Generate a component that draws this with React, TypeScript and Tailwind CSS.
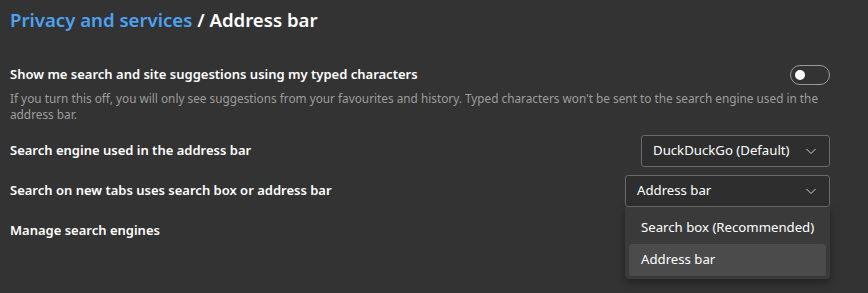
import React from 'react';

const Chevron: React.FC = () => (
    <svg width="12" height="12" viewBox="0 0 12 12" fill="none" className="text-[#cfcfcf]">
        <path d="M1.5 4 L6 8.5 L10.5 4" stroke="currentColor" strokeWidth="1" />
    </svg>
);

const App: React.FC = () => {
    return (
        <div
            className="w-[868px] h-[293px] bg-[#333333] text-white overflow-hidden"
            style={{ fontFamily: '"Noto Sans", "Open Sans", sans-serif' }}
        >
            <div className="pl-[10px] pr-[38px]">
                <h1 className="pt-[7px] h-[34px] text-[18.6px] leading-[26px] font-semibold">
                    <span className="text-[#4ca2f0]">Privacy and services</span>
                    <span> / Address bar</span>
                </h1>

                <div className="mt-[30px]">
                    <div className="flex items-center justify-between h-[22px]">
                        <span className="text-[13px] font-semibold">Show me search and site suggestions using my typed characters</span>
                        <button className="w-[40px] h-[20px] rounded-full border border-[#9a9a9a] flex items-center pl-[4px]">
                            <span className="w-[10px] h-[10px] rounded-full bg-white" />
                        </button>
                    </div>
                    <p className="text-[11.8px] leading-[16px] text-[#9d9d9d] mt-[4px]">
                        If you turn this off, you will only see suggestions from your favourites and history. Typed characters won't be sent to the search engine used in the address bar.
                    </p>
                </div>

                <div className="flex items-center justify-between mt-[13px] h-[32px]">
                    <span className="text-[13px] font-semibold">Search engine used in the address bar</span>
                    <div className="w-[189px] h-[32px] border border-[#6a6a6a] rounded-[3px] bg-[#2e2e2e] flex items-center justify-between pl-[11px] pr-[12px] text-[13.2px]">
                        <span>DuckDuckGo (Default)</span>
                        <Chevron />
                    </div>
                </div>

                <div className="flex items-center justify-between mt-[8px] h-[32px] relative">
                    <span className="text-[13px] font-semibold">Search on new tabs uses search box or address bar</span>
                    <div className="w-[205px] h-[32px] border border-[#6a6a6a] rounded-[3px] bg-[#2e2e2e] flex items-center justify-between pl-[11px] pr-[12px] text-[13.2px]">
                        <span>Address bar</span>
                        <Chevron />
                    </div>
                    <div className="absolute right-0 top-[32px] w-[205px] bg-[#3a3a3a] rounded-b-[4px] shadow-[0_4px_8px_rgba(0,0,0,0.35)] px-[4px] pt-[4px] pb-[3px] text-[13.2px]">
                        <div className="h-[33px] flex items-center pl-[12px]">Search box (Recommended)</div>
                        <div className="h-[32px] flex items-center pl-[12px] bg-[#4b4b4b] rounded-[3px]">Address bar</div>
                    </div>
                </div>

                <div className="mt-[8px] h-[32px] flex items-center">
                    <span className="text-[13px] font-semibold">Manage search engines</span>
                </div>
            </div>
        </div>
    );
};

export default App;
